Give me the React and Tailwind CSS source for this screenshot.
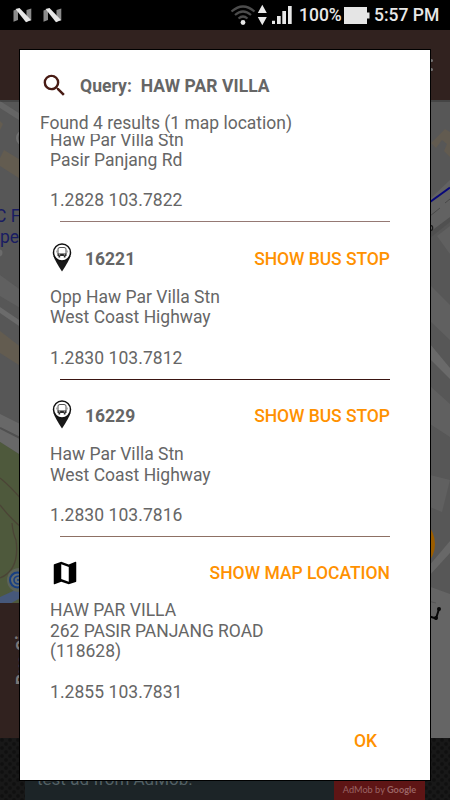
import React from 'react';
import { MdMap, MdSearch } from 'react-icons/md';

const stops = [
  { code: '16221', name: 'Opp Haw Par Villa Stn', road: 'West Coast Highway', position: '1.2830 103.7812', line: 'bg-[#3a1512]' },
  { code: '16229', name: 'Haw Par Villa Stn', road: 'West Coast Highway', position: '1.2830 103.7816', line: 'bg-[#8d7064]' },
];

const NougatIcon = () => (
  <svg width="19" height="15" viewBox="0 0 19 15">
    <path d="M0.5 2.5 L5 1 V12 L0.5 13.8 Z" fill="#8b8b8b" />
    <path d="M13.5 2 L18.3 0.5 V12.5 L13.5 13.5 Z" fill="#8b8b8b" />
    <path d="M2.5 1 L6.5 0 L18 12 L13 14.2 Z" fill="#e8e8e8" />
  </svg>
);

const StatusBar = () => (
  <div className="flex h-[30px] items-center bg-black pl-[13px] text-[#e8e8e8]">
    <div className="flex gap-[11px]">
      <NougatIcon />
      <NougatIcon />
    </div>
    <svg className="ml-[169px]" width="62" height="22" viewBox="231 4 62 22" fill="none">
      <g stroke="#4c4c4c" strokeWidth="2.2">
        <path d="M231.5 11.5 Q243 1.5 254.5 11.5" />
        <path d="M235 15 Q243 8 251 15" />
        <path d="M238.5 18.5 Q243 14.5 247.5 18.5" />
      </g>
      <g fill="#e8e8e8">
        <circle cx="243" cy="22.5" r="2.4" />
        <path d="M262.3 4.7 L266.8 13 H257.8 Z M257.8 17 H266.8 L262.3 25.3 Z" />
        <path d="M272 20.7 h3 v3.3 h-3 Z M277 16 h3.7 v8 h-3.7 Z M282.3 11 h3.7 v13 h-3.7 Z M288 6 h3.7 v18 h-3.7 Z" />
      </g>
    </svg>
    <span className="ml-[6px] w-[45px] whitespace-nowrap text-[17.5px] font-medium">100%</span>
    <svg width="26" height="19" viewBox="0 0 26 19">
      <path d="M0 1 H23 V6.5 H25.5 V12.5 H23 V18 H0 Z" fill="#e5e5e5" />
    </svg>
    <span className="ml-[4px] whitespace-nowrap text-[17.5px] font-medium">5:57 PM</span>
  </div>
);

const MapBackdrop = () => (
  <svg className="block" width="450" height="638" viewBox="0 100 450 638">
    <rect y="100" width="450" height="638" fill="#575757" />
    {/* west side */}
    <path d="M0 101 L22 115 V122 L0 108 Z" fill="#656565" />
    <circle cx="24" cy="138" r="7" fill="#5d5d5d" stroke="#707070" strokeWidth="2" />
    <path d="M0 121 L3 124 L0 130 Z M4 150 L22 161 V180 L0 166 V158 Z M0 331 L22 348 V367 L0 353 Z" fill="#635c50" />
    <path d="M0 275 L22 291 V309 L0 296 Z" fill="#606060" />
    <path d="M0 307 L22 322 V328 L0 313 Z" fill="#6b6b6b" />
    <path d="M0 414 L22 425 V456 L0 442 Z" fill="#686868" />
    <path d="M0 428 L22 439" stroke="#505050" strokeWidth="2" />
    <circle cx="-1" cy="253" r="3.5" fill="#6b6b6b" />
    <path d="M0 442 L22 456 V605 H0 Z" fill="#4e593c" />
    <path d="M0 478 Q10 486 22 500 M0 505 Q11 519 22 528 M12 523 Q13 534 16 540 Q20 570 0 578" fill="none" stroke="#4b4436" strokeWidth="1.3" />
    <path d="M0 597 L22 587 V597 L8 605 H0 Z" fill="#46587a" />
    <circle cx="19" cy="580" r="12" fill="#5c6359" />
    <circle cx="17.5" cy="580" r="7.5" fill="#626c70" stroke="#173f83" strokeWidth="2" />
    <path d="M19 576 Q14 576.5 14 580 Q14 584 19 584 M17 580 H22" stroke="#173f83" strokeWidth="1.6" fill="none" />
    <g fill="#191c62" fontSize="17.5" className="font-['Roboto']">
      <text x="-5" y="221.5">C F</text>
      <text x="0" y="242.5">pe</text>
    </g>
    {/* east side */}
    <path d="M431 143 L445 129 L450 132 V157 L444 151 L447 144 L442 140 L436 148 Z" fill="#625b50" />
    <path d="M430 199 L450 180 V218 L430 232 Z" fill="#626262" />
    <path d="M430 202 L450 187.5" stroke="#08087a" strokeWidth="2" />
    <path d="M430 216 L440 208 M445 203 L450 199" stroke="#494949" strokeWidth="1" />
    <path d="M430 232 L450 217 V222 L430 238 Z" fill="#505050" />
    <path d="M437 236 L450 226 V254 Z M430 285 L450 305 V340 L430 321 Z M430 386 L450 404 V437 L430 424 Z M430 475 L450 480 L442 512 L430 507 Z" fill="#606060" />
    <path d="M430 344 L450 368 V379 L430 359 Z" fill="#6a6a6a" />
    <path d="M428 567 L450 541 V553 L428 577 Z" fill="#686868" />
    <path d="M428 586 L450 594 V738 H428 Z" fill="#656565" />
    <circle cx="406" cy="544" r="29" fill="#9b5d00" />
    <circle cx="430" cy="228" r="2.7" fill="none" stroke="#202020" strokeWidth="1.2" />
    <path d="M428 616 L436 618.5 L439 609" fill="none" stroke="#080808" strokeWidth="2" />
    <circle cx="439" cy="609" r="2" fill="#080808" />
    <circle cx="436" cy="618" r="2" fill="#080808" />
    <path d="M428 601 L436 603" stroke="#555555" strokeWidth="1" />
    {/* side panel */}
    <rect y="603" width="60" height="135" fill="#31221f" />
    <text transform="translate(29 685) rotate(-90)" fontSize="17.5" fontWeight="700" fill="#7c7876" className="font-['Roboto']">Bus Si</text>
    <rect y="100" width="450" height="2" fill="#000000" opacity="0.2" />
  </svg>
);

const AdBanner = () => (
  <div className="relative h-[62px] bg-[#181818]">
    <svg className="block" width="450" height="62">
      <defs>
        <pattern id="mesh" width="8" height="8" patternUnits="userSpaceOnUse">
          <circle cx="2" cy="2" r="2" fill="#101010" />
          <circle cx="6" cy="6" r="2" fill="#101010" />
        </pattern>
      </defs>
      <rect width="450" height="62" fill="url(#mesh)" />
    </svg>
    <div className="absolute inset-y-0 left-[25px] flex w-[400px] items-end justify-between bg-[#1c2427]">
      <span className="mb-[10px] ml-[12px] text-[17px] leading-[22px] text-[#526064]">test ad from AdMob.</span>
      <span className="flex h-5 w-[91px] items-center justify-center bg-[#5e1515] font-['Lato'] text-[9.2px] text-[#9a6464]">
        AdMob by&nbsp;<b>Google</b>
      </span>
    </div>
  </div>
);

const BusPin = () => (
  <svg width="20" height="29" viewBox="0 0 20 29">
    <path d="M1.5 13 Q3 18 10 28.5 Q17 18 18.5 13 Z" fill="#181818" />
    <circle cx="10" cy="9.5" r="8.5" fill="white" stroke="#111111" strokeWidth="1.5" />
    <path d="M6 11 V6 Q6 4.5 8 4.5 H12 Q14 4.5 14 6 V11" fill="white" stroke="#555555" strokeWidth="1" />
    <path d="M4.8 7.5 V9.5 M15.2 7.5 V9.5" stroke="#777777" strokeWidth="0.8" />
    <path d="M5.5 10.5 H14.5 V13 H13.5 V14.5 H11.8 V13 H8.2 V14.5 H6.5 V13 H5.5 Z" fill="#292929" />
    <path d="M6.8 11.8 H8.2 M11.8 11.8 H13.2" stroke="#dddddd" strokeWidth="0.8" />
  </svg>
);

const StopResult = ({ stop }) => (
  <div className="h-[157.5px] shrink-0 pt-[20px]">
    <div className="flex h-[30px] items-center justify-between">
      <div className="flex items-center pl-[2px]">
        <BusPin />
        <span className="ml-[13px] mt-[4px] text-[17.5px] font-bold">{stop.code}</span>
      </div>
      <span className="mt-[4px] text-[17.5px] font-medium tracking-[-0.05px] text-[#ff9100]">SHOW BUS STOP</span>
    </div>
    <div className="mt-[14.5px] h-[92px]">
      <p>{stop.name}</p>
      <p>{stop.road}</p>
      <p className="mt-[20px] tracking-[0.06px]">{stop.position}</p>
    </div>
    <div className={`ml-[10px] h-px ${stop.line}`} />
  </div>
);

const ResultsDialog = () => (
  <div className="absolute left-[20px] top-[50px] flex h-[730px] w-[410px] flex-col bg-white text-[17.5px] leading-[20.5px] text-[#666666] outline-1 outline-black">
    <div className="flex h-[63px] items-center pl-[20px] pt-[8px]">
      <MdSearch size={29} className="text-[#481b14]" />
      <span className="ml-[11px] mt-[2px] whitespace-pre font-bold tracking-[0.06px]">Query:  HAW PAR VILLA</span>
    </div>
    <p className="pl-[20px]">Found 4 results (1 map location)</p>
    <div className="flex h-[645px] flex-col overflow-hidden pl-[30px] pr-[40px]">
      <div className="h-[87.5px] shrink-0 overflow-hidden">
        <div className="-mt-[4px]">
          <p>Haw Par Villa Stn</p>
          <p>Pasir Panjang Rd</p>
          <p className="mt-[19.5px] tracking-[0.06px]">1.2828 103.7822</p>
        </div>
      </div>
      <div className="ml-[10px] h-px shrink-0 bg-[#957974]" />
      {stops.map((stop) => (
        <StopResult key={stop.code} stop={stop} />
      ))}
      <div className="flex items-center justify-between pt-[20.5px]">
        <MdMap size={30} className="text-black" />
        <span className="mt-[2px] font-medium text-[#ff9100]">SHOW MAP LOCATION</span>
      </div>
      <div className="mt-[12.5px]">
        <p>HAW PAR VILLA</p>
        <p className="tracking-[-0.04px]">262 PASIR PANJANG ROAD</p>
        <p>(118628)</p>
        <p className="mt-[20.5px] tracking-[0.06px]">1.2855 103.7831</p>
      </div>
      <button className="mr-[13px] mt-[28px] self-end font-medium text-[#ff9100]">OK</button>
    </div>
  </div>
);

const App = () => (
  <div className="relative h-[800px] w-[450px] overflow-hidden bg-black font-['Roboto',sans-serif]">
    <StatusBar />
    <div className="flex h-[70px] items-center justify-end bg-[#31221f] pr-[17px]">
      <div className="flex flex-col gap-[6px]">
        <span className="size-[3px] rounded-full bg-[#777777]" />
        <span className="size-[3px] rounded-full bg-[#777777]" />
      </div>
    </div>
    <MapBackdrop />
    <AdBanner />
    <ResultsDialog />
  </div>
);

export default App;
